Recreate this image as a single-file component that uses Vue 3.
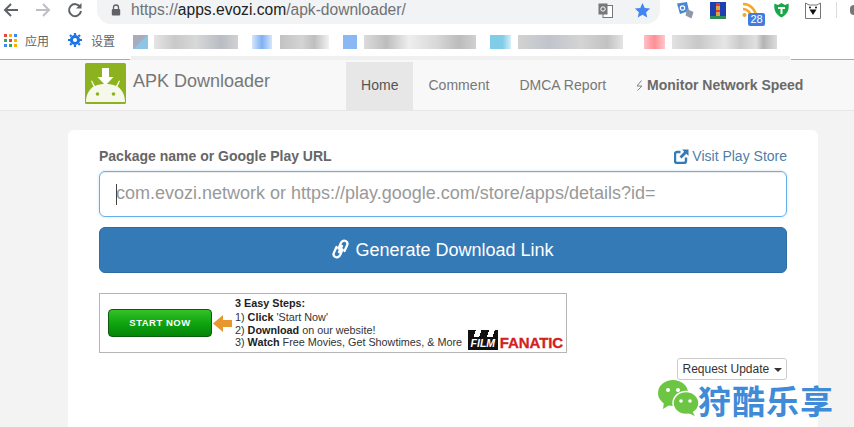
<script setup>
const blurs = [
  { w: 15, c: 'linear-gradient(135deg,#a9adbb 50%,#8fc4e4 50%)', m: 6 },
  { w: 84, c: 'linear-gradient(90deg,#e5e5e5,#c9c9c9 25%,#d8d8d8 50%,#b9bcc4 80%,#d2d2d2)', m: 14 },
  { w: 20, c: 'linear-gradient(90deg,#d6e6fb,#7fb0f2 50%,#d6e6fb)', m: 8 },
  { w: 49, c: 'linear-gradient(90deg,#c2c2c2,#d4d4d4 45%,#bebebe 70%,#f2f2f2)', m: 14 },
  { w: 14, c: '#8ab8f4', m: 7 },
  { w: 112, c: 'linear-gradient(90deg,#dcdcdc,#bdbdbd 20%,#eee 40%,#d8d8d8 65%,#bcbcbc 85%,#d0d0d0)', m: 14 },
  { w: 21, c: 'linear-gradient(90deg,#7fcde8 60%,#d8eef6)', m: 7 },
  { w: 105, c: 'linear-gradient(90deg,#d2d2d2,#c0c4cc 30%,#d4d4d4 60%,#c2c2c2 85%,#e4e4e4)', m: 21 },
  { w: 21, c: 'linear-gradient(90deg,#ffc0c4,#ff8f96 50%,#ffc8cb)', m: 7 },
  { w: 105, c: 'linear-gradient(90deg,#e2e2e2,#c8c8c8 25%,#e6e6e6 50%,#cacaca 65%,#e0e0e0 80%,#b4b4b4 87%,#dcdcdc)', m: 0 }
]
const dots = ['#e8453c', '#f4b400', '#4285f4', '#34a853', '#e8453c', '#f4b400', '#4285f4', '#34a853', '#f4b400']
const navItems = ['Home', 'Comment', 'DMCA Report']
</script>

<template>
  <div class="page">
    <header class="toolbar">
      <div class="navbtns">
        <svg width="18" height="18" viewBox="0 0 18 18"><path d="M16 9H3M9 3 3 9l6 6" fill="none" stroke="#5f6368" stroke-width="2"/></svg>
        <svg width="18" height="18" viewBox="0 0 18 18"><path d="M2 9h13M9 3l6 6-6 6" fill="none" stroke="#bcbfc3" stroke-width="2"/></svg>
        <svg width="18" height="18" viewBox="0 0 18 18"><path d="M14.200 6A6 6 0 1 0 15 10" fill="none" stroke="#5f6368" stroke-width="2"/><path d="M15.500 2v5.500H10z" fill="#5f6368"/></svg>
      </div>
      <div class="omnibox">
        <svg class="lock" width="10" height="12" viewBox="0 0 10 12"><path d="M2.500 5V3.500a2.500 2.500 0 0 1 5 0V5" fill="none" stroke="#5f6368" stroke-width="1.300"/><rect x="0.800" y="5" width="8.400" height="6.500" rx="1" fill="#5f6368"/></svg>
        <span class="url"><span class="dim">https://</span>apps.evozi.com<span class="dim">/apk-downloader/</span></span>
        <svg class="translate" width="15" height="15" viewBox="0 0 15 15"><rect x="5" y="2.500" width="9.500" height="12" fill="#fff" stroke="#777"/><rect x="0.500" y="0.500" width="9" height="11" fill="#777"/><circle cx="5" cy="6" r="2.200" fill="none" stroke="#fff"/></svg>
        <svg class="star" width="17" height="17" viewBox="0 0 24 24"><path d="M12 1.500l3.200 7 7.600.8-5.700 5.100 1.600 7.600-6.700-3.900-6.700 3.900 1.600-7.600L1.200 9.300l7.600-.8z" fill="#4285f4"/></svg>
      </div>
      <div class="exts">
        <svg width="17" height="17" viewBox="0 0 17 17"><path d="M0 1.500l10-1.500 2 9-9 3z" fill="#4a86d8"/><circle cx="5.500" cy="6" r="2.200" fill="none" stroke="#fff" stroke-width="1.200"/><path d="M10 7l6.500 3-2 6.500-6-3z" fill="#8e99a8"/></svg>
        <svg width="16" height="17" viewBox="0 0 16 17"><rect width="16" height="17" fill="#1f3fb0"/><rect x="6" y="3" width="4" height="12" fill="#d9a441"/><rect x="6" y="1" width="4" height="3" fill="#e53935"/><rect x="6" y="8" width="4" height="2" fill="#e53935"/><rect y="14" width="16" height="3" fill="#2e8b57"/></svg>
        <span class="rss">
          <svg width="16" height="16" viewBox="0 0 16 16"><path d="M1 2a13 13 0 0 1 13 13M1 7a8 8 0 0 1 8 8" fill="none" stroke="#f5a623" stroke-width="2.600"/><circle cx="2.500" cy="13" r="2" fill="#f5a623"/></svg>
          <span class="badge">28</span>
        </span>
        <svg width="15" height="16" viewBox="0 0 15 16"><path d="M0.500 1.500 4 3 7.500 1 11 3l3.500-1.500c1 6-1 11-7 14-6-3-8-8-7-14z" fill="#18a848"/><path d="M4 5h7v2H8.500v5h-2V7H4z" fill="#fff"/></svg>
        <svg width="16" height="17" viewBox="0 0 16 17"><path d="M0.500 1 4 3h8l3.500-2v15.500H0.500z" fill="#fff" stroke="#777"/><path d="M4.500 7.500h7L8 13z" fill="#111"/><circle cx="5" cy="5.500" r="1" fill="#111"/><circle cx="11" cy="5.500" r="1" fill="#111"/></svg>
      </div>
      <span class="sep"></span>
      <span class="menu-dot"></span>
    </header>

    <div class="bookmarks">
      <span class="bm apps">
        <span class="grid"><i v-for="(c, i) in dots" :key="i" :style="{ background: c }"></i></span>
        应用
      </span>
      <span class="bm settings">
        <svg width="14" height="14" viewBox="0 0 14 14"><circle cx="7" cy="7" r="3.600" fill="none" stroke="#1a73e8" stroke-width="3"/><path d="M7 0v14M0 7h14M2 2l10 10M12 2 2 12" stroke="#1a73e8" stroke-width="2.200" stroke-dasharray="2 10"/></svg>
        设置
      </span>
      <span class="blurs">
        <i v-for="(b, i) in blurs" :key="i" :style="{ width: b.w + 'px', background: b.c, marginRight: b.m + 'px' }"></i>
      </span>
    </div>

    <div class="strip"></div>

    <nav class="navbar">
      <div class="brand">
        <svg width="41" height="41" viewBox="0 0 41 41">
          <rect width="41" height="41" rx="1.500" fill="#8cb21f"/>
          <path d="M17 5h7v9h4.500l-8 8.500-8-8.500H17z" fill="#fff"/>
          <path d="M1 39c0-7 3-12.500 7.500-15.500L6 18l1-.5 3 5.500c3-1.500 6.500-2 10.500-2s7.500.5 10.500 2l3-5.500 1 .5-2.500 5.500c4.500 3 7.500 8.500 7.500 15.500z" fill="#f6f8ec"/>
          <circle cx="12.500" cy="31" r="1.800" fill="#8cb21f"/><circle cx="28.500" cy="31" r="1.800" fill="#8cb21f"/>
        </svg>
        <span class="brand-text">APK Downloader</span>
      </div>
      <ul class="nav">
        <li v-for="(n, i) in navItems" :key="n" :class="{ active: i === 0 }">{{ n }}</li>
        <li class="monitor">
          <svg class="bolt" width="7" height="11" viewBox="0 0 7 11"><path d="M5.500 0.500 1 6h5l-4.500 4.500" fill="none" stroke="#777" stroke-width="0.900"/></svg>
          <b>Monitor Network Speed</b>
        </li>
      </ul>
    </nav>

    <main class="card">
      <div class="label-row">
        <label>Package name or Google Play URL</label>
        <a class="visit">
          <svg width="15" height="15" viewBox="0 0 15 15"><path d="M12 8.500V12a2 2 0 0 1-2 2H3a2 2 0 0 1-2-2V5a2 2 0 0 1 2-2h3.500" fill="none" stroke="#337ab7" stroke-width="2.400"/><path d="M8 0.500h6.500V7l-2.200-2.200L7.500 9.500 5.500 7.500l4.700-4.800z" fill="#337ab7"/></svg>
          Visit Play Store
        </a>
      </div>
      <div class="input"><span class="caret"></span>com.evozi.network or https://play.google.com/store/apps/details?id=</div>
      <button class="generate">
        <svg class="link" width="17" height="20" viewBox="0 0 17 20"><path d="M6.500 9.500 9 3.800c1-2 3.200-2.600 4.700-1.800s2.200 2.700 1.300 4.500L12.500 12M10.500 10.500 8 16.200c-1 2-3.200 2.600-4.700 1.800S1.100 15.300 2 13.500L4.500 8M7 13l3-6" fill="none" stroke="#fff" stroke-width="2.300" stroke-linecap="round"/></svg>
        Generate Download Link
      </button>
      <div class="ad">
        <span class="start">START NOW</span>
        <svg class="arrow" width="19" height="17" viewBox="0 0 19 17"><path d="M0 8.500 10 0v5h9v7h-9v5z" fill="#e8962e"/></svg>
        <div class="steps">
          <b class="title">3 Easy Steps:</b>
          <span>1) <b>Click</b> 'Start Now'</span>
          <span>2) <b>Download</b> on our website!</span>
          <span class="last">3) <b>Watch</b> Free Movies, Get Showtimes, &amp; More</span>
        </div>
        <div class="film">
          <span class="film-box">FILM</span>
          <span class="fanatic">FANATIC</span>
        </div>
      </div>
      <div class="request-row">
        <button class="request">Request Update <i class="tri"></i></button>
      </div>
    </main>

    <div class="watermark">
      <svg width="42" height="36" viewBox="0 0 42 36">
        <ellipse cx="16" cy="13" rx="15" ry="13" fill="#6cc644"/>
        <path d="M7 22l-1 7 8-5z" fill="#6cc644"/>
        <circle cx="11" cy="10" r="2" fill="#fff"/><circle cx="21" cy="10" r="2" fill="#fff"/>
        <ellipse cx="29" cy="23" rx="13" ry="11.500" stroke="#fff" stroke-width="1.500" fill="#6cc644"/>
        <path d="M35 31l3 5-7-3z" fill="#6cc644"/>
        <circle cx="24" cy="21" r="1.800" fill="#fff"/><circle cx="33" cy="21" r="1.800" fill="#fff"/>
      </svg>
      <span class="wm-text">狩酷乐享</span>
    </div>
  </div>
</template>

<style>
html, body { margin: 0; background: #f3f3f3; overflow: hidden; }
</style>

<style scoped>
.page {
  position: relative;
  width: 854px;
  height: 427px;
  overflow: hidden;
  background: #f3f3f3;
  font-family: "Liberation Sans", Arial, sans-serif;
}
.toolbar {
  height: 24px;
  background: #fff;
  display: flex;
  align-items: center;
}
.navbtns {
  width: 97px;
  padding: 0 0 4px 2px;
  box-sizing: border-box;
  display: flex;
  gap: 14px;
  flex: none;
}
.omnibox {
  width: 563px;
  height: 24px;
  background: #f1f3f4;
  border-radius: 0 0 14px 14px;
  display: flex;
  align-items: center;
  padding: 0 0 4px 14px;
  box-sizing: border-box;
  flex: none;
}
.lock { margin-right: 10px; }
.url { font-size: 15.600px; color: #202124; flex: 1; white-space: nowrap; }
.dim { color: #6f7276; }
.translate { margin-right: 21px; }
.star { margin-right: 9px; }
.exts {
  display: flex;
  align-items: center;
  margin-left: 17px;
  gap: 16px;
  padding-bottom: 4px;
}
.rss { position: relative; display: block; width: 16px; height: 17px; }
.badge {
  position: absolute;
  left: 6px;
  top: 11px;
  width: 17px;
  height: 13px;
  border-radius: 2px;
  background: #3f7de0;
  color: #fff;
  font-size: 11px;
  line-height: 13px;
  text-align: center;
}
.sep { width: 1px; height: 16px; background: #dadce0; margin: 0 0 4px 15px; }
.menu-dot { width: 5px; height: 10px; background: #777; border-radius: 5px 0 0 5px; margin: 0 0 4px 13px; }
.bookmarks {
  height: 32px;
  background: #fff;
  display: flex;
  align-items: center;
  font-family: "Noto Sans CJK SC", sans-serif;
  font-size: 12px;
  color: #5f6368;
}
.bm { display: flex; align-items: center; flex: none; }
.apps { gap: 8px; padding-left: 4px; width: 64px; }
.grid { display: grid; grid-template-columns: repeat(3, 3px); gap: 2px; }
.grid i { width: 3px; height: 3px; display: block; }
.settings { gap: 9px; width: 65px; }
.blurs { display: flex; height: 14px; margin-top: 3px; }
.blurs i { display: block; height: 14px; flex: none; filter: blur(.6px); }
.strip {
  height: 4px;
  box-sizing: border-box;
  background: linear-gradient(90deg, #fff 0, #fff 131px, #f0f0f0 131px, #f0f0f0 790px, #fff 790px);
  border-bottom: 1px solid #a9a9a9;
  border-image: linear-gradient(90deg, #a9a9a9 131px, #f0f0f0 131px, #f0f0f0 790px, #a9a9a9 790px) 1;
}
.navbar {
  height: 51px;
  box-sizing: border-box;
  background: #f8f8f8;
  border-bottom: 1px solid #e7e7e7;
  display: flex;
  padding-left: 85px;
}
.brand { display: flex; width: 261px; flex: none; padding-top: 3px; }
.brand-text {
  font-size: 18px;
  color: #777;
  margin: 6px 0 0 7px;
  line-height: 24px;
}
.nav {
  display: flex;
  margin: 2px 0 0;
  padding: 0;
  list-style: none;
  font-size: 14px;
  letter-spacing: .03px;
  color: #777;
}
.nav li { padding: 0 15px; line-height: 47px; height: 48px; white-space: nowrap; }
.nav li.active { background: #e7e7e7; color: #555; }
.monitor { display: flex; align-items: center; box-sizing: border-box; padding-bottom: 2px !important; }
.monitor b { color: #6a6a6a; letter-spacing: 0; }
.bolt { margin-right: 4px; flex: none; }
.card {
  margin: 19px 0 0 68px;
  width: 750px;
  height: 320px;
  background: #fff;
  border-radius: 6px;
  padding: 0 31px;
  box-sizing: border-box;
}
.label-row {
  display: flex;
  justify-content: space-between;
  align-items: center;
  height: 41px;
  padding-top: 11px;
  box-sizing: border-box;
}
label { font-size: 14px; font-weight: 700; color: #666; }
.visit { color: #4f7fa8; font-size: 14px; display: flex; align-items: center; gap: 3px; }
.input {
  height: 46px;
  box-sizing: border-box;
  border: 1px solid #66afe9;
  border-radius: 6px;
  box-shadow: inset 0 1px 1px rgba(0,0,0,.075), 0 0 3px rgba(102,175,233,.35);
  font-size: 18px;
  line-height: 43px;
  color: #999;
  padding-left: 16px;
  position: relative;
  white-space: nowrap;
}
.caret { position: absolute; left: 16px; top: 12px; width: 1px; height: 21px; background: #444; }
.generate {
  display: flex;
  align-items: center;
  justify-content: center;
  gap: 6px;
  width: 100%;
  height: 46px;
  margin-top: 10px;
  border: 1px solid #2e6da4;
  border-radius: 6px;
  background: #337ab7;
  color: #fff;
  font: 18px "Liberation Sans", Arial, sans-serif;
  padding: 0;
}
.link { margin-top: -3px; }
.ad {
  width: 468px;
  height: 60px;
  margin-top: 20px;
  box-sizing: border-box;
  border: 1px solid #b5b5b5;
  position: relative;
  display: flex;
  align-items: center;
  color: #333;
  font-size: 10.800px;
  background: #fff;
}
.start {
  margin: -1px 0 0 8px;
  width: 104px;
  height: 28px;
  border-radius: 4px;
  background: linear-gradient(#35c028, #0fa510 50%, #068408);
  border: 1px solid #0a5c0a;
  box-sizing: border-box;
  color: #fff;
  font-size: 9.500px;
  font-weight: 700;
  letter-spacing: .5px;
  line-height: 26px;
  text-align: center;
  flex: none;
}
.arrow { margin-left: 1px; flex: none; }
.steps { display: flex; flex-direction: column; margin: -1px 0 0 3px; white-space: nowrap; line-height: 12.500px; }
.steps .title { margin-bottom: 2px; color: #222; }
.steps b { color: #222; }
.film {
  position: absolute;
  right: 3px;
  bottom: 2px;
  display: flex;
  align-items: flex-end;
  gap: 2px;
}
.film-box {
  background: #111;
  color: #fff;
  width: 30px;
  box-sizing: border-box;
  text-align: center;
  font-size: 10.500px;
  font-weight: 700;
  font-style: italic;
  line-height: 13px;
  border-top: 7px solid;
  border-image: repeating-linear-gradient(100deg, #111 0 4px, #fff 4px 7px) 7;
}
.fanatic { color: #d3211c; font-weight: 700; font-size: 15px; line-height: 15px; letter-spacing: -.1px; -webkit-text-stroke: .3px #d3211c; }
.request-row { display: flex; justify-content: flex-end; margin-top: 5px; }
.request {
  height: 22px;
  width: 110px;
  box-sizing: border-box;
  border: 1px solid #ccc;
  border-radius: 3px;
  background: #fff;
  color: #333;
  font: 12px "Liberation Sans", Arial, sans-serif;
  padding: 0;
  white-space: nowrap;
}
.tri {
  display: inline-block;
  width: 0;
  height: 0;
  margin-left: 1px;
  vertical-align: middle;
  border-top: 4px solid #333;
  border-left: 4px solid transparent;
  border-right: 4px solid transparent;
}
.watermark {
  position: absolute;
  left: 657px;
  top: 380px;
  display: flex;
  align-items: flex-start;
}
.wm-text {
  font-family: "Noto Sans CJK SC", sans-serif;
  font-size: 33px;
  line-height: 33px;
  font-weight: 700;
  color: #3f8bd8;
  margin: 4px 0 0 -1px;
  white-space: nowrap;
  letter-spacing: 1px;
}
</style>
